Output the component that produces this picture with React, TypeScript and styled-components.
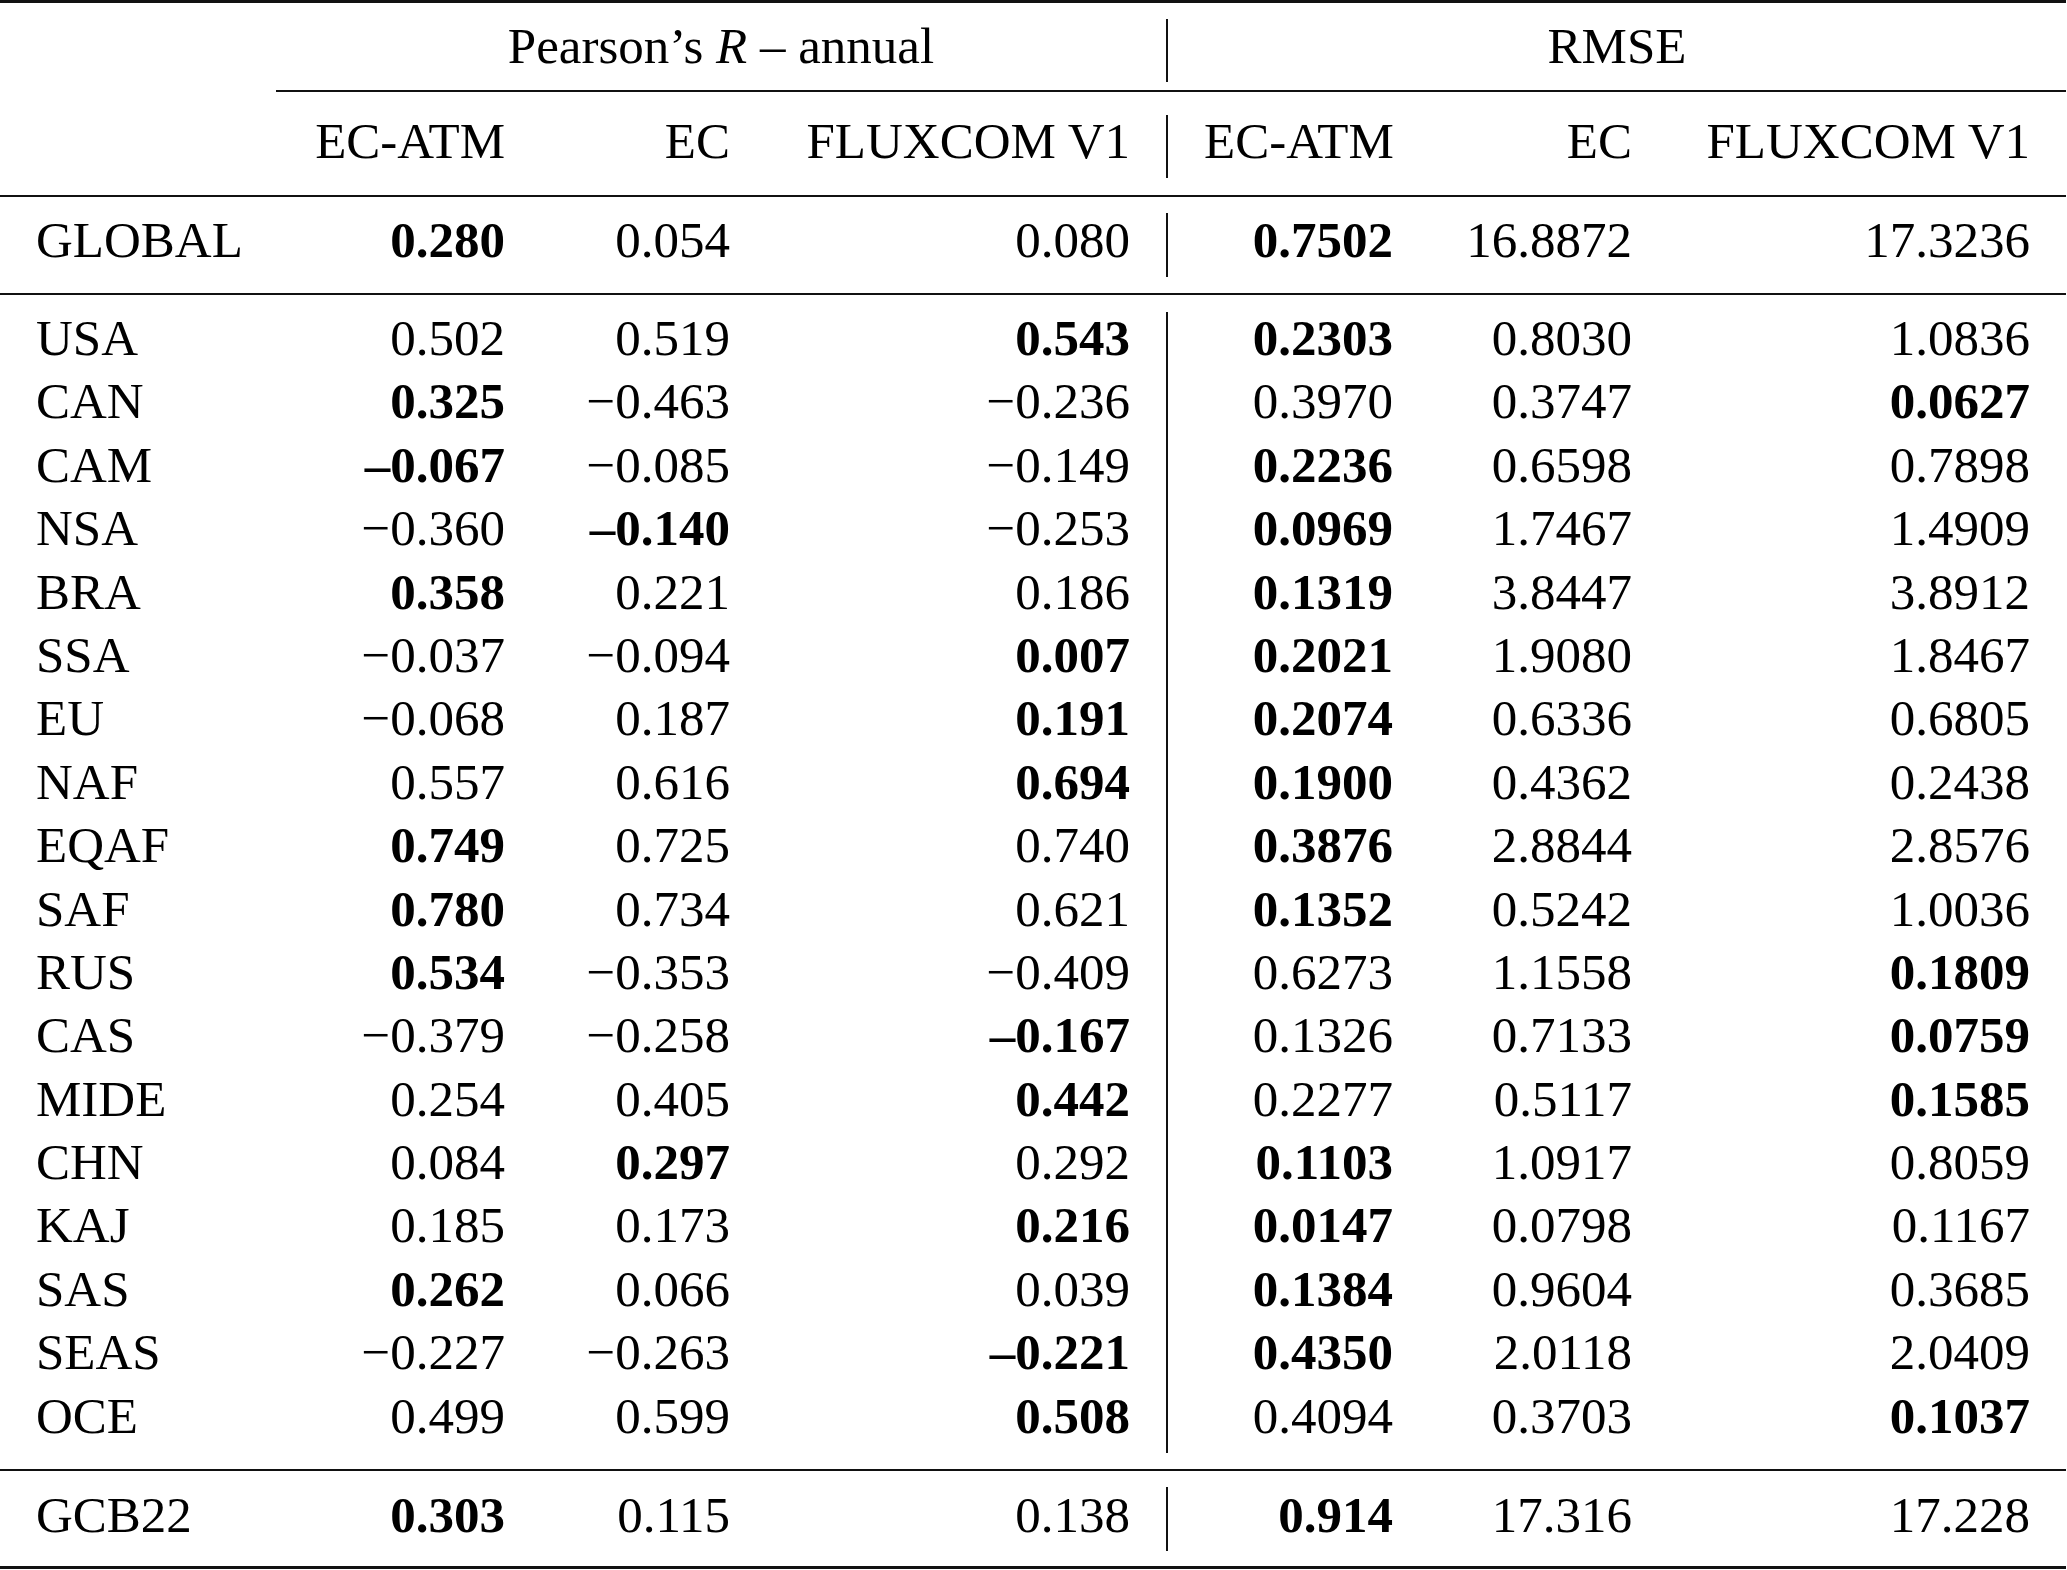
import styled, { createGlobalStyle } from "styled-components";

const GlobalStyle = createGlobalStyle`
    html, body {
        margin: 0;
        padding: 0;
        background: #fff;
    }
`;

type Row = [string, string[]];

const body: Row[] = [
    ["USA", ["0.502", "0.519", "*0.543", "*0.2303", "0.8030", "1.0836"]],
    ["CAN", ["*0.325", "-0.463", "-0.236", "0.3970", "0.3747", "*0.0627"]],
    ["CAM", ["*-0.067", "-0.085", "-0.149", "*0.2236", "0.6598", "0.7898"]],
    ["NSA", ["-0.360", "*-0.140", "-0.253", "*0.0969", "1.7467", "1.4909"]],
    ["BRA", ["*0.358", "0.221", "0.186", "*0.1319", "3.8447", "3.8912"]],
    ["SSA", ["-0.037", "-0.094", "*0.007", "*0.2021", "1.9080", "1.8467"]],
    ["EU", ["-0.068", "0.187", "*0.191", "*0.2074", "0.6336", "0.6805"]],
    ["NAF", ["0.557", "0.616", "*0.694", "*0.1900", "0.4362", "0.2438"]],
    ["EQAF", ["*0.749", "0.725", "0.740", "*0.3876", "2.8844", "2.8576"]],
    ["SAF", ["*0.780", "0.734", "0.621", "*0.1352", "0.5242", "1.0036"]],
    ["RUS", ["*0.534", "-0.353", "-0.409", "0.6273", "1.1558", "*0.1809"]],
    ["CAS", ["-0.379", "-0.258", "*-0.167", "0.1326", "0.7133", "*0.0759"]],
    ["MIDE", ["0.254", "0.405", "*0.442", "0.2277", "0.5117", "*0.1585"]],
    ["CHN", ["0.084", "*0.297", "0.292", "*0.1103", "1.0917", "0.8059"]],
    ["KAJ", ["0.185", "0.173", "*0.216", "*0.0147", "0.0798", "0.1167"]],
    ["SAS", ["*0.262", "0.066", "0.039", "*0.1384", "0.9604", "0.3685"]],
    ["SEAS", ["-0.227", "-0.263", "*-0.221", "*0.4350", "2.0118", "2.0409"]],
    ["OCE", ["0.499", "0.599", "*0.508", "0.4094", "0.3703", "*0.1037"]],
];

const globalRow: Row = ["GLOBAL", ["*0.280", "0.054", "0.080", "*0.7502", "16.8872", "17.3236"]];
const gcbRow: Row = ["GCB22", ["*0.303", "0.115", "0.138", "*0.914", "17.316", "17.228"]];

const colWidths = [276, 265, 225, 400, 263, 239, 398];

const Table = styled.table`
    width: 2066px;
    table-layout: fixed;
    border-collapse: separate;
    border-spacing: 0;
    font-family: "Liberation Serif", "Times New Roman", serif;
    font-size: 51px;
    line-height: 51px;
    color: #000;
`;

const RuleCell = styled.td<{ $above: number; $below: number }>`
    padding: ${p => p.$above}px 0 ${p => p.$below}px;
    font-size: 0;
    line-height: 0;
`;

const Line = styled.div<{ $weight: number }>`
    height: ${p => p.$weight}px;
    background: #111;
`;

const Cell = styled.td<{ $top: number; $bottom: number; $align?: "left" | "right" | "center"; $bold?: boolean; $divider?: boolean }>`
    padding: ${p => p.$top}px 36px ${p => p.$bottom}px;
    text-align: ${p => p.$align ?? "right"};
    font-weight: ${p => (p.$bold ? 700 : 400)};
    border-left: ${p => (p.$divider ? "2px solid #111" : "none")};
    white-space: nowrap;
`;

const Italic = styled.i`
    font-style: italic;
`;

const Rule = ({ above, below, weight, skip = 0 }: { above: number; below: number; weight: number; skip?: number }) => (
    <tr>
        {skip > 0 && <RuleCell $above={above} $below={below} colSpan={skip} />}
        <RuleCell $above={above} $below={below} colSpan={7 - skip}>
            <Line $weight={weight} />
        </RuleCell>
    </tr>
);

const format = (raw: string) => {
    const bold = raw.startsWith("*");
    const v = bold ? raw.slice(1) : raw;
    // bold entries use an en dash, regular ones a true minus
    return { bold, text: v.replace("-", bold ? "\u2013" : "\u2212") };
};

const DataRow = ({ row, top, bottom }: { row: Row; top: number; bottom: number }) => (
    <tr>
        <Cell $top={top} $bottom={bottom} $align="left">{row[0]}</Cell>
        {row[1].map((raw, i) => {
            const { bold, text } = format(raw);
            return (
                <Cell key={i} $top={top} $bottom={bottom} $bold={bold} $divider={i === 3}>
                    {text}
                </Cell>
            );
        })}
    </tr>
);

const heads = ["EC-ATM", "EC", "FLUXCOM V1", "EC-ATM", "EC", "FLUXCOM V1"];

const App = () => (
    <>
        <GlobalStyle />
        <Table>
            <colgroup>
                {colWidths.map((w, i) => <col key={i} style={{ width: w }} />)}
            </colgroup>
            <tbody>
                <Rule above={0} below={16} weight={3} />
                <tr>
                    <Cell $top={2} $bottom={10} />
                    <Cell $top={2} $bottom={10} $align="center" colSpan={3}>
                        Pearson’s <Italic>R</Italic> – annual
                    </Cell>
                    <Cell $top={2} $bottom={10} $align="center" colSpan={3} $divider>
                        RMSE
                    </Cell>
                </tr>
                <Rule above={8} below={23} weight={2} skip={1} />
                <tr>
                    <Cell $top={1} $bottom={11} />
                    {heads.map((h, i) => (
                        <Cell key={i} $top={1} $bottom={11} $divider={i === 3}>{h}</Cell>
                    ))}
                </tr>
                <Rule above={17} below={16} weight={2} />
                <DataRow row={globalRow} top={2} bottom={11} />
                <Rule above={16} below={17} weight={2} />
                {body.map(r => <DataRow key={r[0]} row={r} top={1} bottom={11.4} />)}
                <Rule above={16} below={16} weight={2} />
                <DataRow row={gcbRow} top={3} bottom={10} />
                <Rule above={15} below={0} weight={3} />
            </tbody>
        </Table>
    </>
);

export default App;
